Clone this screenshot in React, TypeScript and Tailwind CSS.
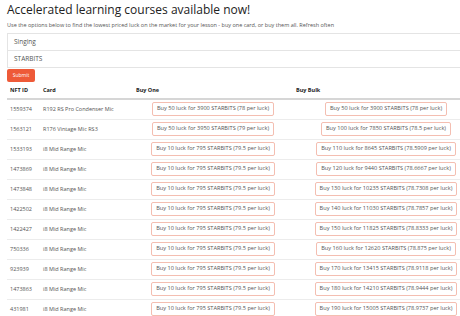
const rows = [
  { id: "1559374", card: "R192 RS Pro Condenser Mic", one: "Buy 50 luck for 3900 STARBITS (78 per luck)", bulk: "Buy 50 luck for 3900 STARBITS (78 per luck)" },
  { id: "1563121", card: "R176 Vintage Mic RS3", one: "Buy 50 luck for 3950 STARBITS (79 per luck)", bulk: "Buy 100 luck for 7850 STARBITS (78.5 per luck)" },
  { id: "1533193", card: "i8 Mid Range Mic", one: "Buy 10 luck for 795 STARBITS (79.5 per luck)", bulk: "Buy 110 luck for 8645 STARBITS (78.5909 per luck)" },
  { id: "1473869", card: "i8 Mid Range Mic", one: "Buy 10 luck for 795 STARBITS (79.5 per luck)", bulk: "Buy 120 luck for 9440 STARBITS (78.6667 per luck)" },
  { id: "1473848", card: "i8 Mid Range Mic", one: "Buy 10 luck for 795 STARBITS (79.5 per luck)", bulk: "Buy 130 luck for 10235 STARBITS (78.7308 per luck)" },
  { id: "1422502", card: "i8 Mid Range Mic", one: "Buy 10 luck for 795 STARBITS (79.5 per luck)", bulk: "Buy 140 luck for 11030 STARBITS (78.7857 per luck)" },
  { id: "1422427", card: "i8 Mid Range Mic", one: "Buy 10 luck for 795 STARBITS (79.5 per luck)", bulk: "Buy 150 luck for 11825 STARBITS (78.8333 per luck)" },
  { id: "750336", card: "i8 Mid Range Mic", one: "Buy 10 luck for 795 STARBITS (79.5 per luck)", bulk: "Buy 160 luck for 12620 STARBITS (78.875 per luck)" },
  { id: "923939", card: "i8 Mid Range Mic", one: "Buy 10 luck for 795 STARBITS (79.5 per luck)", bulk: "Buy 170 luck for 13415 STARBITS (78.9118 per luck)" },
  { id: "1473863", card: "i8 Mid Range Mic", one: "Buy 10 luck for 795 STARBITS (79.5 per luck)", bulk: "Buy 180 luck for 14210 STARBITS (78.9444 per luck)" },
  { id: "431981", card: "i8 Mid Range Mic", one: "Buy 10 luck for 795 STARBITS (79.5 per luck)", bulk: "Buy 190 luck for 15005 STARBITS (78.9737 per luck)" },
];

function BuyButton({ label }: { label: string }) {
  return (
    <button className="h-[14px] px-[4px] border border-[#f4beb1] rounded-[2px] bg-white text-[#555] text-[5.6px] leading-none whitespace-nowrap align-middle">
      {label}
    </button>
  );
}

export default function App() {
  return (
    <div
      className="w-[460px] h-[316px] overflow-hidden bg-white pl-[7px]"
      style={{ fontFamily: '"Open Sans", "Noto Sans", sans-serif' }}
    >
      <div className="w-[480px]">
        {/* Heading */}
        <h1 className="pt-[3px] text-[12px] leading-[14px] font-medium text-[#222]">
          Accelerated learning courses available now!
        </h1>
        <p className="mt-[4px] text-[5.5px] leading-[8px] text-[#555]">
          Use the options below to find the lowest priced luck on the market for your lesson - buy one card, or buy them all. Refresh often
        </p>

        {/* Filters */}
        <div className="mt-[4px] flex flex-col items-start">
          <div className="w-full h-[18px] border border-[#e4e4e4] flex items-center pl-[6px] text-[6.5px] text-[#555]">
            Singing
          </div>
          <div className="w-full h-[17px] border border-t-0 border-[#e4e4e4] flex items-center pl-[6px] text-[6.5px] text-[#555]">
            STARBITS
          </div>
          <button className="block mt-[1px] w-[28px] h-[13px] rounded-[2px] bg-[#ee5a38] text-white text-[5px] leading-none">
            Submit
          </button>
        </div>

        {/* Table */}
        <table className="mt-[1px] w-[472px] table-fixed border-collapse text-[5.5px] text-[#555]">
          <colgroup>
            <col className="w-[33px]" />
            <col className="w-[93px]" />
            <col className="w-[160px]" />
            <col className="w-[186px]" />
          </colgroup>
          <thead>
            <tr className="border-b-2 border-[#d6d6d6] text-left text-[#222] font-bold">
              <th className="h-[16px] p-0 pl-[3px]">NFT ID</th>
              <th className="h-[16px] p-0 pl-[3px]">Card</th>
              <th className="h-[16px] p-0 pl-[3px]">Buy One</th>
              <th className="h-[16px] p-0 pl-[3px]">Buy Bulk</th>
            </tr>
          </thead>
          <tbody>
            {rows.map((r) => (
              <tr key={r.id} className="border-t border-[#ececec]">
                <td className="h-[20px] p-0 pl-[3px]">{r.id}</td>
                <td className="h-[20px] p-0 pl-[3px]">{r.card}</td>
                <td className="h-[20px] p-0 text-center">
                  <BuyButton label={r.one} />
                </td>
                <td className="h-[20px] p-0 text-center">
                  <BuyButton label={r.bulk} />
                </td>
              </tr>
            ))}
          </tbody>
        </table>
      </div>
    </div>
  );
}
